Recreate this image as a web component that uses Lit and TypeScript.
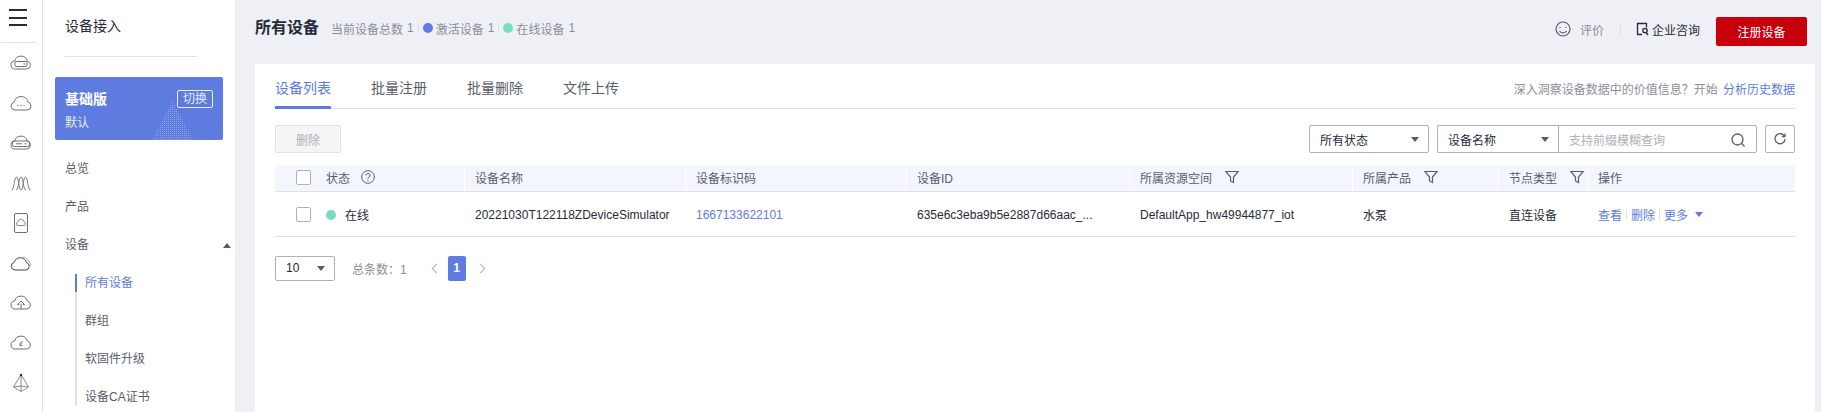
import { LitElement, html, css, svg } from "lit";
import { customElement } from "lit/decorators.js";

const cloud = "M6.500 18h11a4 4 0 0 0 .8-7.900 6.500 6.500 0 0 0-12.600-.2A4 4 0 0 0 6.500 18z";
const railIcons = [
  svg`<path d="${cloud}"/><rect x="6" y="10.500" width="12" height="5" rx="1"/><path d="M14.500 13h2"/>`,
  svg`<path d="M6 19h12a4 4 0 0 0 .9-7.900 7 7 0 0 0-13.700 0A4 4 0 0 0 6 19z"/><path d="M8.500 14.500h1M11.500 14.500h1M14.500 14.500h1" stroke-width="1.500"/>`,
  svg`<path d="${cloud}"/><rect x="3.500" y="10" width="17" height="5.500" rx="2"/><path d="M7 12.800h6M15.500 12.800h2"/>`,
  svg`<path d="M2.500 19c3 0 2.500-13 5-13s2 13 4.500 13" stroke-width=".9"/><path d="M7 19c3 0 2.500-13 5-13s2 13 5 13" stroke-width=".9"/><path d="M12 19c2.500 0 2-13 4.500-13s2 13 5 13" stroke-width=".9"/>`,
  svg`<rect x="5.500" y="2.500" width="13" height="19" rx="1.500"/><path d="M9 14.500h6a1.500 1.500 0 0 0 .3-3 3.300 3.300 0 0 0-6.600 0 1.500 1.500 0 0 0 .3 3z" stroke-width=".8"/>`,
  svg`<path d="M6 19h10.500a3.800 3.800 0 0 0 .8-7.500 6.200 6.200 0 0 0-12-.2A3.900 3.900 0 0 0 6 19z" stroke="#3d4250"/><path d="M12.500 6.500a5 5 0 0 1 6.500 3.500 3.500 3.500 0 0 1 1.500 6" stroke="#adb0b8"/>`,
  svg`<path d="${cloud}"/><path d="M12 18v-5.500M8.500 13.500l3.500-3.500 3.500 3.500H14M10 13.500H8.500"/>`,
  svg`<path d="${cloud}"/><path d="M11 14.500l2.500-4.500M11 14.500V11.500M11 14.500h2.500" stroke-width=".9"/>`,
  svg`<path d="M12 3.500L4.500 16 12 20.500 19.500 16zM12 3.500v17M4.500 16L12 15l7.500 1" stroke-width=".8"/><circle cx="12" cy="4" r="1.200" fill="#252b3a" stroke="none"/>`,
];

const funnel = html`<svg class="funnel" viewBox="0 0 14 14"><path d="M.8 1.500h12.400L8.500 7v5.500L5.500 11V7z"/></svg>`;
const caret = html`<i class="caret"></i>`;
const check = html`<span class="check"></span>`;

@customElement("app-root")
export class AppRoot extends LitElement {
  static styles = css`
    :host { display: block; width: 1821px; height: 412px; overflow: hidden; background: #eef0f5;
      font: 12px "Liberation Sans", "Noto Sans CJK SC", sans-serif; color: #252b3a; }
    * { box-sizing: border-box; }
    .page { display: flex; height: 412px; }
    .rail { width: 43px; flex: none; background: #fff; border-right: 1px solid #dfe1e6; display: flex; flex-direction: column; }
    .burger { height: 43px; margin-right: 6px; margin-left: 1px; padding: 9px 8px 0; border-bottom: 1px solid #dfe1e6; display: flex; flex-direction: column; gap: 5.500px; }
    .burger i { display: block; height: 2px; width: 18px; background: #252b3a; }
    .rail-icons { display: flex; flex-direction: column; align-items: center; padding-top: 8px; }
    .rail-icons svg { width: 24px; height: 24px; margin-bottom: 16px; fill: none; stroke: #6b6f7c; stroke-width: 1; }
    .nav { width: 192px; flex: none; background: #fff; padding-left: 12px; }
    .nav-title { font-size: 14px; line-height: 20px; padding: 16px 0 20px 10px; }
    .nav-rule { height: 1px; width: 132px; margin-left: 10px; background: #dfe1e6; }
    .edition { position: relative; overflow: hidden; margin-top: 20px; width: 168px; height: 63px; background: #5e7ce0; border-radius: 2px; color: #fff; padding: 12px 10px 0; }
    .edition-top { display: flex; justify-content: space-between; align-items: center; }
    .edition b { font-size: 14px; line-height: 20px; font-weight: 700; }
    .switch { width: 36px; height: 18px; line-height: 16px; text-align: center; border: 1px solid #fff; border-radius: 2px; opacity: .85; margin-top: -1px; }
    .edition small { display: block; font-size: 12px; line-height: 16px; margin-top: 6px; opacity: .85; }
    .dots { position: absolute; left: 97px; top: 24px; width: 41px; height: 39px; }
    .items { padding-top: 10px; color: #575d6c; }
    .item { height: 38px; line-height: 38px; padding-left: 10px; display: flex; justify-content: space-between; align-items: center; padding-right: 4px; }
    .up { width: 0; height: 0; border: 4px solid transparent; border-top: 0; border-bottom: 5px solid #575d6c; }
    .sub { margin-left: 20px; border-left: 2px solid #dfe1e6; position: relative; height: 132px; padding-left: 8px; margin-top: 10px; }
    .sub::before { content: ""; position: absolute; left: -2px; top: 0; width: 2px; height: 18px; background: #5e7ce0; }
    .sub div { height: 38px; line-height: 18px; }
    .sub .on { color: #5e7ce0; }
    .content { flex: 1; min-width: 0; padding-left: 20px; padding-right: 6px; }
    .top { height: 64px; display: flex; align-items: center; padding-right: 8px; }
    h1 { font-size: 16px; font-weight: 700; margin: 0 12px 0 0; line-height: 24px; position: relative; top: -4px; }
    .stats { display: flex; align-items: center; color: #8a8e99; position: relative; top: -4px; }
    .stats .n { margin-left: 4px; }
    .stats .sep { width: 1px; height: 11px; background: #dfe1e6; margin: 0 4px; }
    .dot { width: 10px; height: 10px; border-radius: 50%; margin-right: 3px; flex: none; }
    .blue { background: #5e7ce0; } .green { background: #73dfc0; }
    .actions { margin-left: auto; display: flex; align-items: center; position: relative; top: -3px; }
    .rate { display: flex; align-items: center; gap: 9px; color: #8a8e99; padding-right: 16px; border-right: 1px solid #dfe1e6; height: 14px; }
    .rate svg { width: 16px; height: 16px; fill: none; stroke: #575d6c; stroke-width: 1.200; }
    .consult { display: flex; align-items: center; gap: 3px; margin-left: 15px; }
    .consult svg { width: 13px; height: 14px; fill: none; stroke: #252b3a; stroke-width: 1.300; }
    .primary { width: 91px; height: 29px; margin-left: 16px; border: 0; border-radius: 2px; background: #c7000b; color: #fff; font: inherit; position: relative; top: 2px; }
    .card { background: #fff; height: 348px; padding: 0 20px; }
    .tabs { height: 45px; border-bottom: 1px solid #dfe1e6; display: flex; gap: 40px; font-size: 14px; color: #575d6c; }
    .tab { width: 56px; padding-top: 14px; line-height: 20px; height: 45px; white-space: nowrap; }
    .tab.on { color: #5e7ce0; border-bottom: 3px solid #5e7ce0; }
    .hint { margin-left: auto; font-size: 12px; color: #8a8e99; padding-top: 16px; }
    .hint a { color: #5e7ce0; margin-left: 2px; }
    .tools { display: flex; align-items: center; margin-top: 16px; height: 28px; }
    .del { width: 66px; height: 28px; border: 1px solid #dfe1e6; border-radius: 2px; background: #f5f5f6; color: #adb0b8; font: inherit; }
    .sel { height: 28px; border: 1px solid #adb0b8; border-radius: 2px; display: flex; align-items: center; justify-content: space-between; padding: 0 9px 0 10px; background: #fff; }
    .caret { width: 0; height: 0; border: 4px solid transparent; border-bottom: 0; border-top: 5px solid #575d6c; display: block; }
    .s1 { width: 120px; margin-left: auto; margin-right: 8px; }
    .s2 { width: 121px; border-right: 0; border-radius: 2px 0 0 2px; }
    .search { width: 199px; height: 28px; border: 1px solid #adb0b8; border-radius: 0 2px 2px 0; display: flex; align-items: center; justify-content: space-between; padding: 0 10px; color: #adb0b8; }
    .search svg { width: 16px; height: 16px; fill: none; stroke: #575d6c; stroke-width: 1.300; margin-top: 2px; }
    .refresh { width: 30px; height: 28px; margin-left: 8px; border: 1px solid #adb0b8; border-radius: 2px; display: flex; align-items: center; justify-content: center; }
    .refresh svg { width: 14px; height: 14px; fill: none; stroke: #575d6c; stroke-width: 1.300; }
    .row { display: grid; grid-template-columns: 189px 221px 221px 223px 223px 146px 89px 208px; align-items: center; }
    .head { margin-top: 12px; height: 27px; background: #f3f6fd; border-bottom: 1px solid #dfe1e6; color: #575d6c; }
    .head > div { height: 26px; display: flex; align-items: center; padding: 0 0 2px 10px; border-left: 1px solid #fff; }
    .head > div:first-child { border-left: 0; }
    .body { height: 45px; border-bottom: 1px solid #dfe1e6; }
    .body > div { padding: 1px 0 0 11px; white-space: nowrap; display: flex; align-items: center; }
    .row > .first { padding-left: 21px; }
    .check { width: 15px; height: 15px; border: 1px solid #adb0b8; border-radius: 2px; margin-right: 15px; background: #fff; flex: none; }
    .help { width: 14px; height: 14px; margin-left: 11px; fill: none; stroke: #575d6c; }
    .funnel { width: 14px; height: 14px; fill: none; stroke: #575d6c; stroke-width: 1.200; margin-left: 13px; }
    .link { color: #5e7ce0; }
    .ops { gap: 4px; }
    .ops u { width: 1px; height: 11px; background: #dfe1e6; }
    .ops .caret { border-top-color: #5e7ce0; margin-left: 3px; }
    .online { margin-left: 6px; }
    .pager { display: flex; align-items: center; margin-top: 18px; height: 26px; }
    .size { width: 60px; height: 25px; border: 1px solid #adb0b8; border-radius: 2px; display: flex; justify-content: space-between; align-items: center; padding: 0 9px 0 10px; }
    .total { margin-left: 17px; color: #8a8e99; }
    .nav-a { width: 7px; height: 7px; border-left: 1px solid #adb0b8; border-bottom: 1px solid #adb0b8; transform: rotate(45deg); margin-left: 26px; }
    .nav-b { width: 7px; height: 7px; border-right: 1px solid #adb0b8; border-top: 1px solid #adb0b8; transform: rotate(45deg); margin-left: 11px; }
    .pg { width: 18px; height: 25px; margin-left: 8px; background: #5e7ce0; color: #fff; border-radius: 2px; font-weight: 700; text-align: center; line-height: 25px; }
  `;

  render() {
    return html`<div class="page">
      <aside class="rail">
        <div class="burger"><i></i><i></i><i></i></div>
        <div class="rail-icons">
          ${railIcons.map((p) => html`<svg viewBox="0 0 24 24">${p}</svg>`)}
        </div>
      </aside>
      <nav class="nav">
        <div class="nav-title">设备接入</div>
        <div class="nav-rule"></div>
        <div class="edition">
          <svg class="dots" viewBox="0 0 41 39">
            <defs><pattern id="dp" width="2" height="2" patternUnits="userSpaceOnUse"><rect width="1" height="1" fill="#fff" fill-opacity=".28"/></pattern></defs>
            <path d="M20.500 0L41 39H0z" fill="url(#dp)"/>
          </svg>
          <div class="edition-top"><b>基础版</b><span class="switch">切换</span></div>
          <small>默认</small>
        </div>
        <div class="items">
          <div class="item">总览</div>
          <div class="item">产品</div>
          <div class="item">设备<i class="up"></i></div>
          <div class="sub">
            <div class="on">所有设备</div>
            <div>群组</div>
            <div>软固件升级</div>
            <div>设备CA证书</div>
          </div>
        </div>
      </nav>
      <main class="content">
        <header class="top">
          <h1>所有设备</h1>
          <div class="stats">
            <span>当前设备总数</span><span class="n">1</span><i class="sep"></i>
            <i class="dot blue"></i><span>激活设备</span><span class="n">1</span><i class="sep"></i>
            <i class="dot green"></i><span>在线设备</span><span class="n">1</span>
          </div>
          <div class="actions">
            <div class="rate">
              <svg viewBox="0 0 16 16"><circle cx="8" cy="8" r="7"/><path d="M5 6v1M11 6v1M4.500 10c1.500 2.500 5.500 2.500 7 0"/></svg>
              评价
            </div>
            <div class="consult">
              <svg viewBox="0 0 13 14"><path d="M10.500 5.500V1.500h-9v11H6"/><circle cx="9" cy="8.500" r="2.200"/><path d="M10 10.500l2 2.500"/></svg>
              企业咨询
            </div>
            <button class="primary">注册设备</button>
          </div>
        </header>
        <section class="card">
          <div class="tabs">
            <div class="tab on">设备列表</div>
            <div class="tab">批量注册</div>
            <div class="tab">批量删除</div>
            <div class="tab">文件上传</div>
            <div class="hint">深入洞察设备数据中的价值信息？开始 <a>分析历史数据</a></div>
          </div>
          <div class="tools">
            <button class="del">删除</button>
            <div class="sel s1">所有状态${caret}</div>
            <div class="sel s2">设备名称${caret}</div>
            <div class="search">支持前缀模糊查询
              <svg viewBox="0 0 16 16"><circle cx="7.500" cy="7.500" r="5.500"/><path d="M11.500 11.500l3 3"/></svg>
            </div>
            <div class="refresh"><svg viewBox="0 0 14 14"><path d="M11.500 4.500A5 5 0 1 0 12 7M12 1.500v3.200H8.800"/></svg></div>
          </div>
          <div class="row head">
            <div class="first">${check}状态
              <svg class="help" viewBox="0 0 14 14"><circle cx="7" cy="7" r="6.300"/><path d="M5 5.500a2 2 0 1 1 2.800 1.800c-.6.300-.8.700-.8 1.300M7 10v1"/></svg>
            </div>
            <div>设备名称</div>
            <div>设备标识码</div>
            <div>设备ID</div>
            <div>所属资源空间${funnel}</div>
            <div>所属产品${funnel}</div>
            <div>节点类型${funnel}</div>
            <div>操作</div>
          </div>
          <div class="row body">
            <div class="first">${check}<i class="dot green"></i><span class="online">在线</span></div>
            <div>20221030T122118ZDeviceSimulator</div>
            <div class="link">1667133622101</div>
            <div>635e6c3eba9b5e2887d66aac_...</div>
            <div>DefaultApp_hw49944877_iot</div>
            <div>水泵</div>
            <div>直连设备</div>
            <div class="ops"><span class="link">查看</span><u></u><span class="link">删除</span><u></u><span class="link">更多</span>${caret}</div>
          </div>
          <div class="pager">
            <div class="size">10${caret}</div>
            <span class="total">总条数：1</span>
            <i class="nav-a"></i>
            <span class="pg">1</span>
            <i class="nav-b"></i>
          </div>
        </section>
      </main>
    </div>`;
  }
}
